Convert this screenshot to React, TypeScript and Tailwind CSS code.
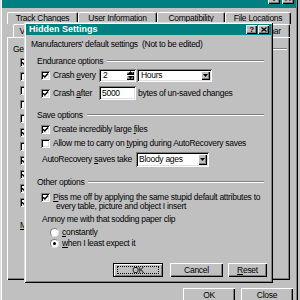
import React from "react";

const winBorder =
  "shadow-[inset_1px_1px_0_#dfdfdf,inset_-1px_-1px_0_#000,inset_2px_2px_0_#fff,inset_-2px_-2px_0_#808080]";
const raised =
  "shadow-[inset_1px_1px_0_#fff,inset_-1px_-1px_0_#000,inset_-2px_-2px_0_#808080]";
const sunken =
  "shadow-[inset_1px_1px_0_#808080,inset_-1px_-1px_0_#fff,inset_2px_2px_0_#000,inset_-2px_-2px_0_#dfdfdf]";

function Check({ checked }: { checked?: boolean }) {
  return (
    <span className={`w-[9px] h-[9px] bg-white shrink-0 flex items-center justify-center ${sunken}`}>
      {checked && (
        <svg width="7" height="7" viewBox="0 0 7 7">
          <path d="M1 3.2 L2.8 5 L6 1.6" stroke="#000" strokeWidth="1.5" fill="none" />
        </svg>
      )}
    </span>
  );
}

function Radio({ on }: { on?: boolean }) {
  return (
    <span className="w-[9px] h-[9px] rounded-full bg-white shrink-0 flex items-center justify-center border border-t-[#808080] border-l-[#808080] border-r-[#dfdfdf] border-b-[#dfdfdf]">
      {on && <span className="w-[3px] h-[3px] rounded-full bg-black" />}
    </span>
  );
}

function ArrowBtn() {
  return (
    <span className={`w-[9px] h-full bg-[#c0c0c0] flex items-center justify-center ${raised}`}>
      <svg width="5" height="3" viewBox="0 0 5 3">
        <path d="M0 0 H5 L2.5 3 Z" fill="#000" />
      </svg>
    </span>
  );
}

function XGlyph() {
  return (
    <svg width="6" height="5" viewBox="0 0 6 5">
      <path d="M0.5 0.5 L5.5 4.5 M5.5 0.5 L0.5 4.5" stroke="#000" strokeWidth="1.3" fill="none" />
    </svg>
  );
}

function Header({ children }: { children: React.ReactNode }) {
  return (
    <div className="h-[14px] flex items-center pl-[11px] pr-[7px] gap-[4px]">
      <span>{children}</span>
      <span className="flex-1 flex flex-col">
        <span className="h-px bg-[#808080]" />
        <span className="h-px bg-white" />
      </span>
    </div>
  );
}

function Btn({ w, children, def }: { w: string; children: React.ReactNode; def?: boolean }) {
  return (
    <div
      className={`${w} h-[14px] bg-[#c0c0c0] flex items-center justify-center ${
        def
          ? "border border-black shadow-[inset_1px_1px_0_#fff,inset_-1px_-1px_0_#808080]"
          : raised
      }`}
    >
      {def ? (
        <span className="w-[42px] h-[8px] flex items-center justify-center border border-dotted border-black">{children}</span>
      ) : (
        children
      )}
    </div>
  );
}

function Tab({ w, children }: { w: string; children?: React.ReactNode }) {
  return (
    <div
      className={`${w} h-full shrink-0 flex items-center justify-center overflow-hidden rounded-t-[2px] border-t border-l border-t-white border-l-white border-r border-r-black shadow-[inset_-1px_0_0_#808080]`}
    >
      {children}
    </div>
  );
}

export default function App() {
  const bgChecks = [true, false, false, false, false, true, false, true, true, true, true];
  return (
    <div className="relative w-[300px] h-[300px] overflow-hidden bg-[#c0c0c0] text-black text-[8.5px] tracking-[-0.28px] leading-none whitespace-nowrap font-['Liberation_Sans',Arial,sans-serif]">
      {/* Background Options window */}
      <div className={`absolute left-0 top-[-10px] w-[298px] h-[330px] bg-[#c0c0c0] p-[2px] flex flex-col ${winBorder}`}>
        <div className="h-[16px] bg-[#008080] flex items-start justify-between pl-[2px] pr-[2px]">
          <span className="text-white font-bold text-[9px] tracking-normal mt-[-1px]">Options</span>
          <div className="flex gap-[2px] mt-[1px]">
            <span className={`w-[12px] h-[11px] bg-[#c0c0c0] flex items-center justify-center font-bold ${raised}`}>?</span>
            <span className={`w-[12px] h-[11px] bg-[#c0c0c0] flex items-center justify-center ${raised}`}>
              <XGlyph />
            </span>
          </div>
        </div>
        {/* tab row 1 */}
        <div className="mt-[4px] h-[12px] flex pl-[5px]">
          <Tab w="w-[71px]">Track Changes</Tab>
          <Tab w="w-[79px]">User Information</Tab>
          <Tab w="w-[68px]">Compatibility</Tab>
          <Tab w="w-[66px]">File Locations</Tab>
        </div>
        {/* tab row 2 */}
        <div className="h-[13px] flex pl-[11px]">
          <Tab w="w-[30px]">View</Tab>
          <Tab w="w-[48px]" />
          <Tab w="w-[36px]" />
          <Tab w="w-[36px]" />
          <Tab w="w-[37px]" />
          <Tab w="w-[90px]">Spelling &amp; Grammar</Tab>
        </div>
        {/* panel */}
        <div className={`ml-[5px] w-[283px] h-[243px] flex flex-col pt-[6px] ${raised}`}>
          <div className="h-[12px] flex items-center pl-[6px] pr-[3px] gap-[4px]">
            <span>General options</span>
            <span className="flex-1 flex flex-col">
              <span className="h-px bg-[#808080]" />
              <span className="h-px bg-white" />
            </span>
          </div>
          {bgChecks.map((c, i) => (
            <div key={i} className="h-[14px] flex items-center pl-[13px]">
              <Check checked={c} />
            </div>
          ))}
          <div className="mt-[9px] h-[14px] flex items-center pl-[13px]">
            <span>
              <u>M</u>
            </span>
          </div>
        </div>
        <div className="mt-[8px] flex justify-end gap-[6px] pr-[3px]">
          <Btn w="w-[52px]">OK</Btn>
          <Btn w="w-[52px]">Close</Btn>
        </div>
      </div>

      {/* Hidden Settings dialog */}
      <div className={`absolute left-[24px] top-[22px] w-[249px] h-[261px] bg-[#c0c0c0] p-[2px] flex flex-col ${winBorder}`}>
        <div className="h-[11px] bg-[#008080] flex items-center justify-between pl-[3px] pr-[2px]">
          <span className="text-white font-bold text-[9px] tracking-normal">Hidden Settings</span>
          <div className="flex gap-[1px]">
            <span className={`w-[11px] h-[9px] bg-[#c0c0c0] flex items-center justify-center font-bold text-[8px] ${raised}`}>?</span>
            <span className={`w-[11px] h-[9px] bg-[#c0c0c0] flex items-center justify-center ${raised}`}>
              <XGlyph />
            </span>
          </div>
        </div>
        <div className="mt-[2px] h-[14px] flex items-center pl-[5px]">
          <span className="whitespace-pre">Manufacturers' default settings  (Not to be edited)</span>
        </div>
        <div className="mt-[3px]">
          <Header>Endurance options</Header>
        </div>
        {/* Crash every */}
        <div className="h-[14px] flex items-center pl-[15px]">
          <div className="w-[58px] flex items-center gap-[3px]">
            <Check checked />
            <span>
              Crash <u>e</u>very
            </span>
          </div>
          <div className={`w-[37px] h-[13px] bg-white flex items-center p-[2px] ${sunken}`}>
            <span className="flex-1 pl-[2px]">2</span>
            <div className="w-[8px] h-full flex flex-col">
              <span className={`flex-1 flex items-center justify-center bg-[#c0c0c0] ${raised}`}>
                <svg width="5" height="3" viewBox="0 0 5 3">
                  <path d="M0 3 H5 L2.5 0 Z" fill="#000" />
                </svg>
              </span>
              <span className={`flex-1 flex items-center justify-center bg-[#c0c0c0] ${raised}`}>
                <svg width="5" height="3" viewBox="0 0 5 3">
                  <path d="M0 0 H5 L2.5 3 Z" fill="#000" />
                </svg>
              </span>
            </div>
          </div>
          <div className={`ml-[1px] w-[75px] h-[13px] bg-white flex items-center p-[2px] ${sunken}`}>
            <span className="flex-1 pl-[2px]">Hours</span>
            <ArrowBtn />
          </div>
        </div>
        {/* Crash after */}
        <div className="mt-[4px] h-[14px] flex items-center pl-[15px]">
          <div className="w-[58px] flex items-center gap-[3px]">
            <Check checked />
            <span>
              Crash <u>a</u>fter
            </span>
          </div>
          <div className={`w-[37px] h-[14px] bg-white flex items-center pl-[3px] ${sunken}`}>5000</div>
          <span className="ml-[2px]">bytes of un-saved changes</span>
        </div>
        <div className="mt-[8px]">
          <Header>Save options</Header>
        </div>
        <div className="h-[14px] flex items-center pl-[15px] gap-[3px]">
          <Check checked />
          <span>
            Create incredibly large <u>f</u>iles
          </span>
        </div>
        <div className="h-[14px] flex items-center pl-[15px] gap-[3px]">
          <Check />
          <span>
            Allow me to carry on <u>t</u>yping during AutoRecovery saves
          </span>
        </div>
        <div className="mt-[2px] h-[15px] flex items-center pl-[16px]">
          <span className="w-[94px]">
            AutoRecovery <u>s</u>aves take
          </span>
          <div className={`w-[73px] h-[15px] bg-white flex items-center p-[2px] ${sunken}`}>
            <span className="flex-1 pl-[1px]">Bloody ages</span>
            <ArrowBtn />
          </div>
        </div>
        <div className="mt-[8px]">
          <Header>Other options</Header>
        </div>
        <div className="mt-[3px] flex pl-[15px] gap-[3px]">
          <span className="mt-[0.5px]">
            <Check checked />
          </span>
          <div className="flex flex-col">
            <span className="h-[9.5px] flex items-center">
              <span>
                <u>P</u>iss me off by applying the same stupid default attributes to
              </span>
            </span>
            <span className="h-[9.5px] flex items-center pl-[3px]">every table, picture and object I insert</span>
          </div>
        </div>
        <div className="mt-[1px] h-[14px] flex items-center pl-[16px]">
          <span>Annoy me with that sodding paper clip</span>
        </div>
        <div className="h-[12px] flex items-center pl-[24px] gap-[3px]">
          <Radio />
          <span>
            <u>c</u>onstantly
          </span>
        </div>
        <div className="h-[11px] flex items-center pl-[24px] gap-[3px]">
          <Radio on />
          <span>
            <u>w</u>hen I least expect it
          </span>
        </div>
        <div className="mt-[14px] flex pl-[87px]">
          <Btn w="w-[50px]" def>
            OK
          </Btn>
          <div className="ml-[7px]">
            <Btn w="w-[53px]">Cancel</Btn>
          </div>
          <div className="ml-[5px]">
            <Btn w="w-[39px]">
              <span>
                <u>R</u>eset
              </span>
            </Btn>
          </div>
        </div>
      </div>
    </div>
  );
}
